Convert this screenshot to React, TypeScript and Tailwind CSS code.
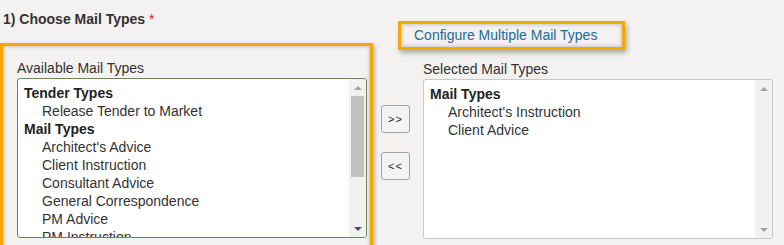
import { useState } from "react"

type Group = { label: string; items: string[] }

const available: Group[] = [
  { label: "Tender Types", items: ["Release Tender to Market"] },
  {
    label: "Mail Types",
    items: [
      "Architect's Advice",
      "Client Instruction",
      "Consultant Advice",
      "General Correspondence",
      "PM Advice",
      "PM Instruction",
      "Site Instruction",
    ],
  },
]

const selected: Group[] = [{ label: "Mail Types", items: ["Architect's Instruction", "Client Advice"] }]

function ScrollBar({ thumb }: { thumb: boolean }) {
  return (
    <div className="w-[17px] shrink-0 bg-[#f1f1f1] flex flex-col items-center">
      <div className="h-[17px] flex items-center justify-center">
        <span className="w-0 h-0 border-x-[4px] border-x-transparent border-b-[4px] border-b-[#a3a3a3]" />
      </div>
      <div className="flex-1 w-full px-[2px]">{thumb && <div className="h-[81px] bg-[#c1c1c1]" />}</div>
      <div className="h-[17px] flex items-center justify-center">
        <span
          className={`w-0 h-0 border-x-[4px] border-x-transparent border-t-[4px] ${
            thumb ? "border-t-[#505050]" : "border-t-[#a3a3a3]"
          }`}
        />
      </div>
    </div>
  )
}

function ListBox({ groups, active, thumb }: { groups: Group[]; active?: boolean; thumb: boolean }) {
  return (
    <div
      className={`h-[160px] w-[350px] flex overflow-hidden rounded-[3px] bg-white border ${
        active ? "border-[#6a8759]" : "border-[#c8c8c8]"
      }`}
    >
      <div className="flex-1 pt-[5px] pl-[6px] overflow-hidden text-[14px] leading-[18px] text-[#333]">
        {groups.map((g) => (
          <div key={g.label}>
            <div className="font-bold text-[#222]">{g.label}</div>
            {g.items.map((item) => (
              <div key={item} className="pl-[18px] whitespace-nowrap">
                {item}
              </div>
            ))}
          </div>
        ))}
      </div>
      <ScrollBar thumb={thumb} />
    </div>
  )
}

function MoveButton({ label }: { label: string }) {
  return (
    <button className="w-[29px] h-[28px] rounded-[3px] border border-[#a3a3a3] bg-[#f3f3f3] text-[11px] leading-none text-[#1b1b4a] tracking-[1px]">
      {label}
    </button>
  )
}

export default function App() {
  const [picked] = useState(selected)

  return (
    <div className="w-[784px] h-[245px] overflow-hidden bg-[#f3f2f0] flex font-['Liberation_Sans',Arial,sans-serif] text-[#333]">
      <div className="w-[373px] shrink-0">
        <div className="pt-[9px] pl-[3px] text-[14px] leading-[20px] font-bold text-[#333]">
          1) Choose Mail Types <span className="text-[#e02020] font-normal">*</span>
        </div>
        <div className="mt-[14px] h-[210px] border-[3px] border-[#f6a800] pl-[14px] pt-[13px] shadow-[inset_0_0_4px_rgba(0,0,0,0.28),2px_2px_4px_rgba(0,0,0,0.25)]">
          <div className="text-[14px] leading-[18px] mb-[1px]">Available Mail Types</div>
          <ListBox groups={available} active thumb />
        </div>
      </div>

      <div className="flex-1">
        <div className="mt-[21px] ml-[25px] w-[227px] h-[29px] border-[3px] border-[#f6a800] pl-[13px] text-[14px] leading-[23px] text-[#1d6a96] shadow-[inset_0_0_4px_rgba(0,0,0,0.28),2px_3px_5px_rgba(0,0,0,0.3)]">
          Configure Multiple Mail Types
        </div>
        <div className="flex mt-[10px]">
          <div className="ml-[8px] pt-[45px] flex flex-col gap-[19px]">
            <MoveButton label=">>" />
            <MoveButton label="<<" />
          </div>
          <div className="ml-[13px]">
            <div className="text-[14px] leading-[18px] mb-[1px]">Selected Mail Types</div>
            <ListBox groups={picked} thumb={false} />
          </div>
        </div>
      </div>
    </div>
  )
}
